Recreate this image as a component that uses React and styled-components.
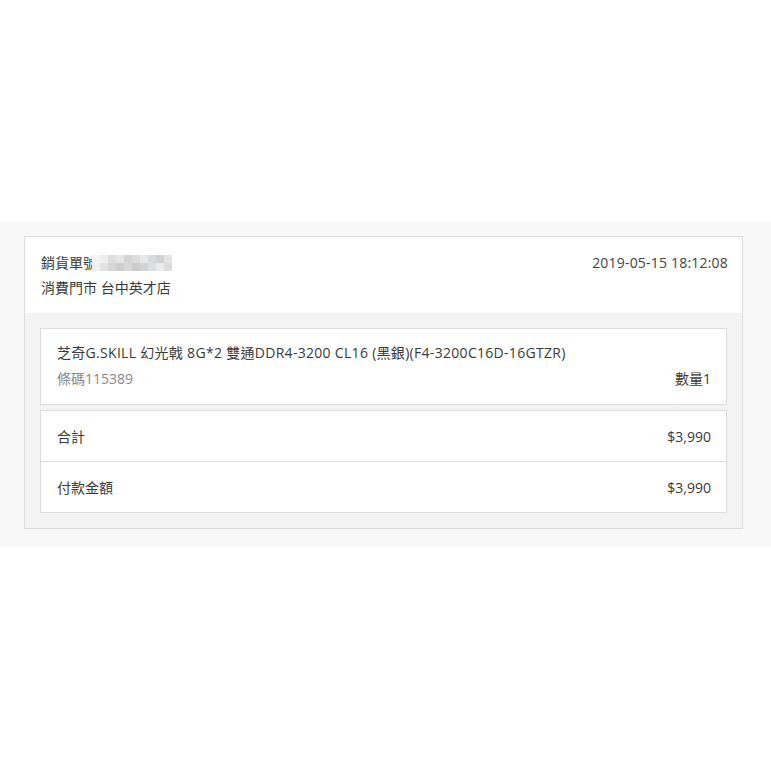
import React from 'react';
import styled, { createGlobalStyle } from 'styled-components';

const GlobalStyle = createGlobalStyle`
  body {
    margin: 0;
    background: #ffffff;
    font-family: 'Open Sans', 'Noto Sans CJK TC', sans-serif;
    color: #3a3a3a;
  }
`;

const blurCells = [
  '#f4f4f4', '#eeeeee', '#dedede', '#e6e6e6', '#d4d4d4', '#dcdcdc', '#e8e8e8', '#dadada', '#d2d2d2', '#e4e4e4',
  '#f0f0f0', '#e2e2e2', '#d6d6d6', '#cdcdcd', '#d8d8d8', '#cbcbcb', '#d2d2d2', '#dde0e3', '#ebebeb', '#dcdcdc',
];

function Receipt() {
  return (
    <Band>
      <Card>
        <Header>
          <div>
            <Line>
              銷貨單號
              <Blur>
                {blurCells.map((c, i) => (
                  <Cell key={i} $color={c} />
                ))}
              </Blur>
            </Line>
            <Line>消費門市 台中英才店</Line>
          </div>
          <DateText>2019-05-15 18:12:08</DateText>
        </Header>
        <Body>
          <ItemBox>
            <ItemName>芝奇G.SKILL 幻光戟 8G*2 雙通DDR4-3200 CL16 (黑銀)(F4-3200C16D-16GTZR)</ItemName>
            <ItemMeta>
              <Muted>條碼115389</Muted>
              <span>數量1</span>
            </ItemMeta>
          </ItemBox>
          <TotalsBox>
            <TotalRow>
              <span>合計</span>
              <span>$3,990</span>
            </TotalRow>
            <TotalRow>
              <span>付款金額</span>
              <span>$3,990</span>
            </TotalRow>
          </TotalsBox>
        </Body>
      </Card>
    </Band>
  );
}

export default function App() {
  return (
    <>
      <GlobalStyle />
      <Page>
        <Receipt />
      </Page>
    </>
  );
}

const Page = styled.div`
  padding-top: 222px;
  height: 771px;
  box-sizing: border-box;
`;

const Band = styled.div`
  background: #f8f8f8;
  padding: 14px 28px 18px 24px;
`;

const Card = styled.div`
  border: 1px solid #dddddd;
  background: #f3f3f3;
`;

const Header = styled.div`
  background: #ffffff;
  display: flex;
  justify-content: space-between;
  align-items: flex-start;
  padding: 13px 14px 13px 16px;
`;

const Line = styled.div`
  font-size: 14px;
  line-height: 25px;
  display: flex;
  align-items: center;
  white-space: nowrap;
`;

const Blur = styled.span`
  display: inline-grid;
  grid-template-columns: repeat(10, 8px);
  grid-auto-rows: 8px;
  margin-left: -5px;
`;

const Cell = styled.span`
  background: ${({ $color }) => $color};
`;

const DateText = styled.div`
  font-size: 14px;
  line-height: 25px;
  color: #444444;
  letter-spacing: 0.2px;
`;

const Body = styled.div`
  padding: 15px;
  display: flex;
  flex-direction: column;
  gap: 5px;
`;

const ItemBox = styled.div`
  background: #ffffff;
  border: 1px solid #dddddd;
  padding: 11px 15px 12px 16px;
`;

const ItemName = styled.div`
  font-size: 14px;
  line-height: 26px;
  letter-spacing: 0.3px;
  white-space: nowrap;
`;

const ItemMeta = styled.div`
  display: flex;
  justify-content: space-between;
  font-size: 14px;
  line-height: 26px;
`;

const Muted = styled.span`
  color: #888888;
`;

const TotalsBox = styled.div`
  background: #ffffff;
  border: 1px solid #dddddd;
`;

const TotalRow = styled.div`
  display: flex;
  justify-content: space-between;
  align-items: center;
  height: 50px;
  padding: 0 15px 0 16px;
  font-size: 14px;

  & + & {
    border-top: 1px solid #dddddd;
  }
`;
